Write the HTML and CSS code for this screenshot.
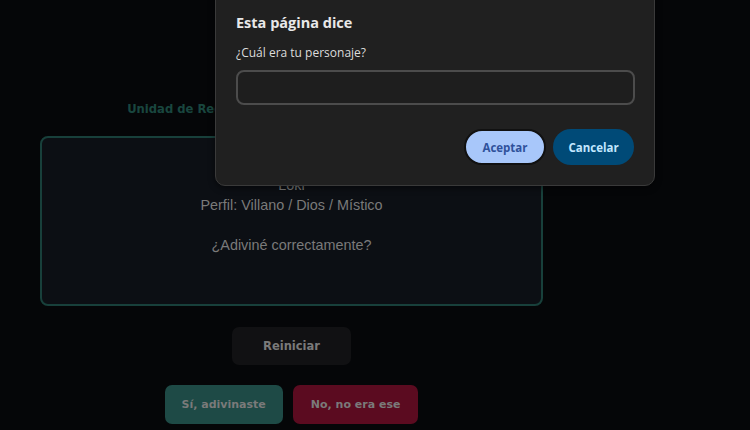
FILE: index.html
```html
<!DOCTYPE html>
<html lang="es">
<head>
<meta charset="utf-8">
<title>Adivina el personaje</title>
<link rel="stylesheet" href="styles.css">
</head>
<body>
<main class="page">
  <h2 class="heading">Unidad de Reconocimiento de Personajes Ficticios</h2>
  <section class="card">
    <p class="line">Loki</p>
    <p class="line">Perfil: Villano / Dios / Místico</p>
    <p class="line question">¿Adiviné correctamente?</p>
  </section>
  <div class="row">
    <button class="btn btn-reset">Reiniciar</button>
  </div>
  <div class="row answers">
    <button class="btn btn-yes">Sí, adivinaste</button>
    <button class="btn btn-no">No, no era ese</button>
  </div>
</main>

<div class="dialog">
  <div class="dialog-title">Esta página dice</div>
  <div class="dialog-msg">¿Cuál era tu personaje?</div>
  <input class="dialog-input" type="text">
  <div class="dialog-actions">
    <button class="pill pill-ok">Aceptar</button>
    <button class="pill pill-cancel">Cancelar</button>
  </div>
</div>
</body>
</html>
```

FILE: styles.css
```css
html, body {
  margin: 0;
  padding: 0;
  background: #050608;
  height: 100%;
  overflow: hidden;
}

.page {
  margin-left: 40px;
  width: 503px;
  padding-top: 100px;
  font-family: "Liberation Sans", Arial, sans-serif;
}

.heading {
  margin: 0;
  text-align: center;
  font-family: "DejaVu Sans", Verdana, sans-serif;
  font-size: 11.6px;
  line-height: 18px;
  font-weight: bold;
  color: #19463f;
  white-space: nowrap;
}

.card {
  margin-top: 18px;
  box-sizing: border-box;
  height: 170px;
  border: 2px solid #18403b;
  border-radius: 8px;
  background: #0c0f14;
  padding: 37px 20px 0;
  text-align: center;
}

.line {
  margin: 0;
  font-size: 14.4px;
  line-height: 20px;
  color: #7a7a7a;
}

.question {
  margin-top: 20px;
}

.row {
  display: flex;
  justify-content: center;
  gap: 10px;
  margin-top: 21px;
}

.answers {
  margin-top: 20px;
}

.btn {
  border: none;
  border-radius: 7px;
  font-family: "DejaVu Sans", Verdana, sans-serif;
  font-weight: bold;
  font-size: 11px;
  color: #7a7a7a;
  height: 38px;
  padding: 0 17px;
}

.btn-reset {
  background: #111113;
  padding: 0 31px;
  font-size: 11.5px;
}

.btn-yes {
  background: #1e4a46;
  height: 39px;
}

.btn-no {
  background: #5b0b20;
  height: 39px;
  padding: 0 18px;
}

/* Browser prompt overlay */
.dialog {
  position: absolute;
  left: 215px;
  top: -12px;
  width: 440px;
  box-sizing: border-box;
  padding: 24px 20px 20px 20px;
  background: #202020;
  border: 1px solid #3a3a3a;
  border-radius: 10px;
  font-family: "Open Sans", "Noto Sans", sans-serif;
  box-shadow: 0 2px 6px rgba(0, 0, 0, 0.5);
}

.dialog-title {
  font-size: 14.5px;
  font-weight: 700;
  line-height: 20px;
  color: #e8e8e8;
}

.dialog-msg {
  margin-top: 12px;
  font-size: 12px;
  line-height: 16px;
  color: #dcdcdc;
}

.dialog-input {
  display: block;
  margin-top: 9px;
  box-sizing: border-box;
  width: 399px;
  height: 35px;
  background: #1e1e1e;
  border: 2px solid #4c4c4c;
  border-radius: 8px;
  outline: none;
}

.dialog-actions {
  display: flex;
  justify-content: flex-end;
  gap: 7px;
  margin-top: 24px;
}

.pill {
  height: 36px;
  border-radius: 18px;
  font-family: "Open Sans", "Noto Sans", sans-serif;
  font-weight: 700;
  font-size: 11.5px;
  padding: 0;
  cursor: pointer;
}

.pill-ok {
  width: 82px;
  background: #a8c7fa;
  color: #2f519a;
  border: 2px solid #111;
}

.pill-cancel {
  width: 81px;
  background: #004a77;
  color: #c2e7ff;
  border: none;
}
```
